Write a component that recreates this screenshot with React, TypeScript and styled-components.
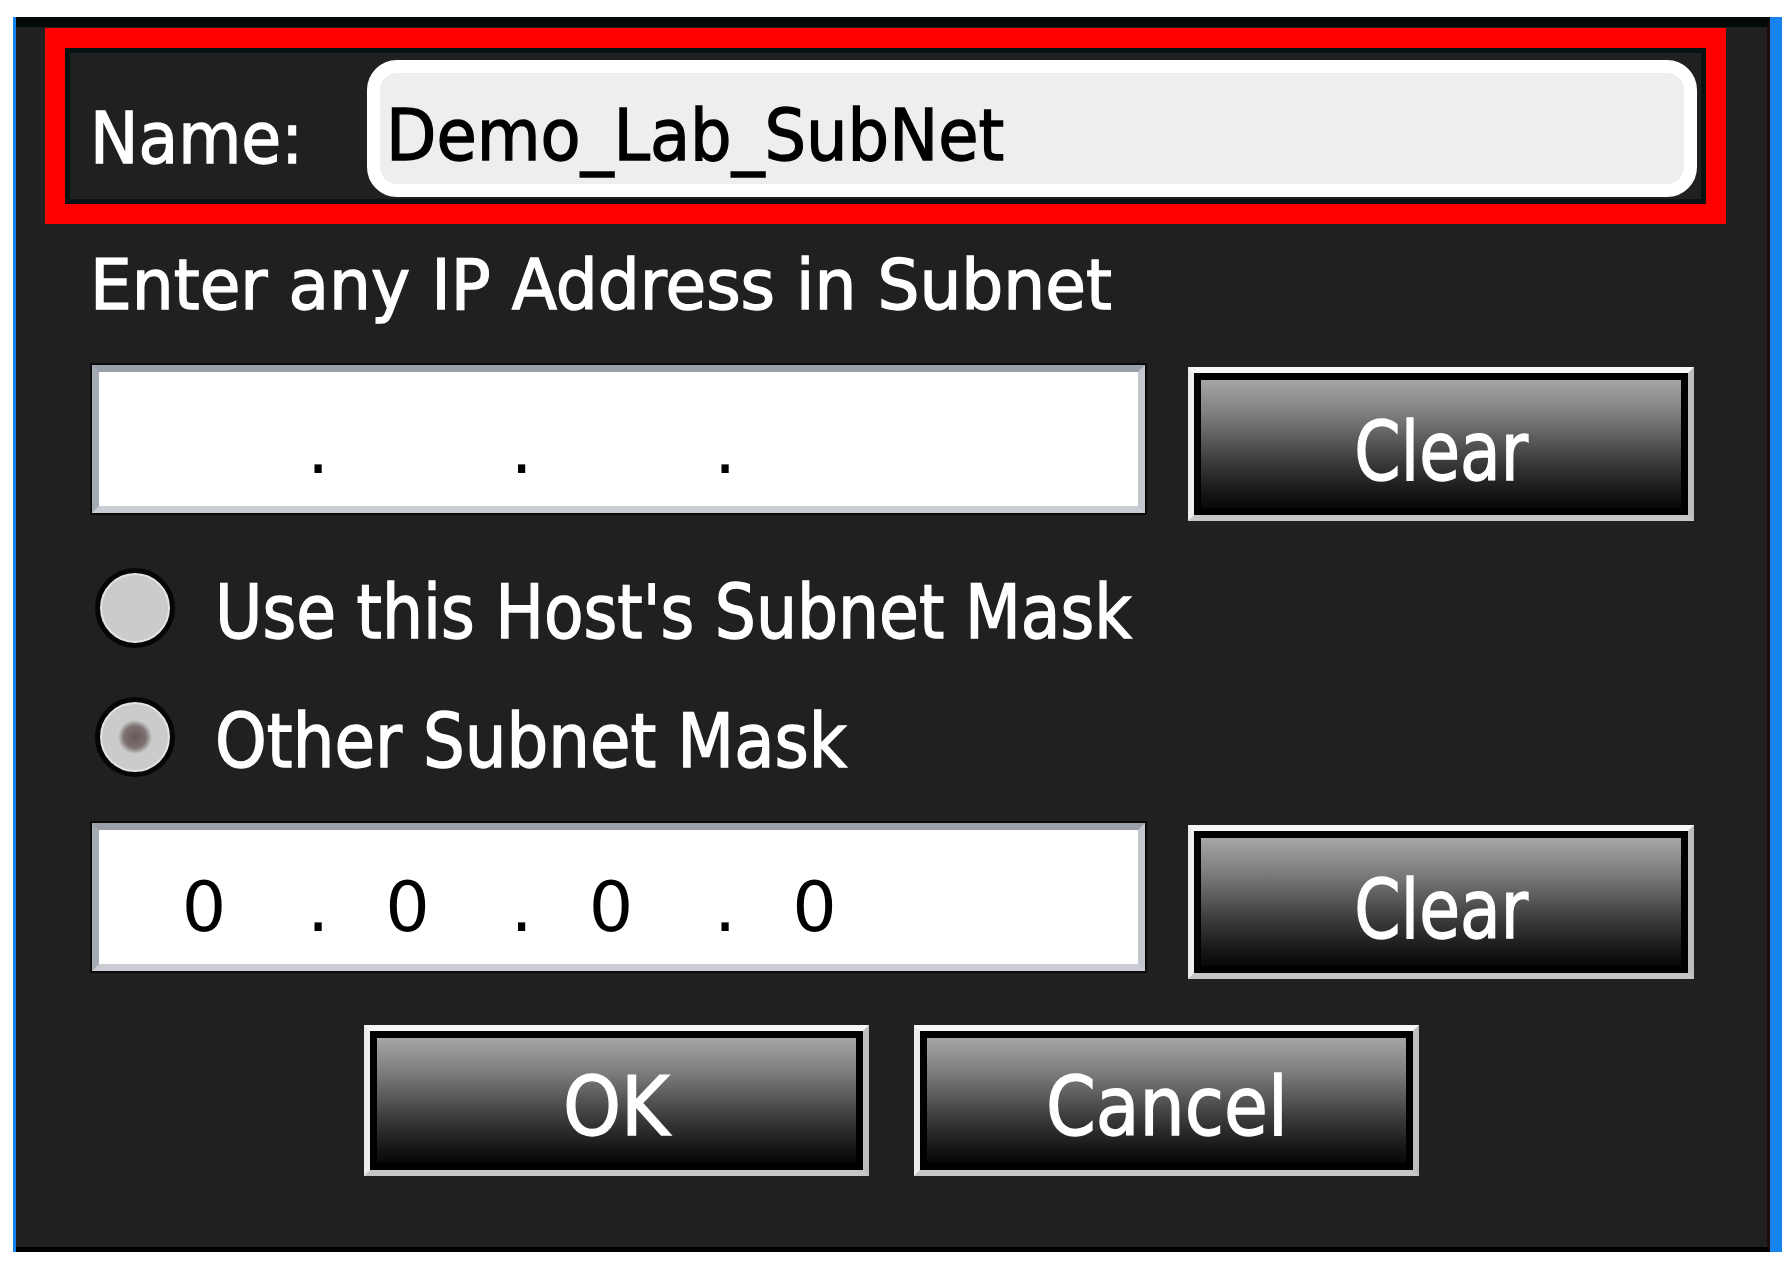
import styled, { createGlobalStyle } from "styled-components";

const GlobalStyle = createGlobalStyle`
  html, body {
    margin: 0;
    padding: 0;
    background: #ffffff;
  }
  body {
    font-family: "DejaVu Sans", Verdana, sans-serif;
  }
`;

const Page = styled.div`
  padding: 17px 0 0 13px;
`;

// blue window edge around the dark dialog
const Frame = styled.div`
  width: 1769px;
  box-sizing: border-box;
  background: #1683ee;
  padding: 0 12px 0 3px;
`;

const Dialog = styled.div`
  display: flex;
  flex-direction: column;
  background: #202020;
  border-top: 10px solid #040909;
  border-bottom: 5px solid #000000;
  border-right: 3px solid #1e0c08;
  padding: 1px 0 71px 0;
`;

// tahoma-ish narrow text: the glyphs are squeezed horizontally and a bit heavier
const Squeeze = styled.span<{ $x: number; $origin?: string }>`
  display: inline-block;
  white-space: pre;
  -webkit-text-stroke: 1.4px currentColor;
  transform: scaleX(${(p) => p.$x});
  transform-origin: ${(p) => p.$origin ?? "left center"};
`;

const Highlight = styled.div`
  margin-left: 29px;
  width: 1681px;
  height: 196px;
  box-sizing: border-box;
  border: 20px solid #ff0000;
  box-shadow: inset 0 0 0 5px #071212;
  display: flex;
  align-items: center;
  padding: 12px 9px 7px 25px;
`;

const NameLabel = styled.div`
  width: 277px;
  flex: none;
  padding-top: 19px;
  color: #ffffff;
  font-size: 72px;
  line-height: 72px;
`;

const NameField = styled.div`
  flex: 1;
  height: 137px;
  box-sizing: border-box;
  border: 13px solid #ffffff;
  border-radius: 30px;
  background: #eeeeee;
  display: flex;
  align-items: center;
  padding: 13px 0 0 6px;
  color: #000000;
  font-size: 72px;
  line-height: 72px;
`;

const Caption = styled.div`
  margin: 26px 0 0 74px;
  color: #ffffff;
  font-size: 70px;
  line-height: 70px;
  height: 70px;
`;

const FieldRow = styled.div<{ $top: number }>`
  display: flex;
  align-items: flex-start;
  gap: 43px;
  margin: ${(p) => p.$top}px 0 0 76px;
`;

const IpBox = styled.div`
  width: 1053px;
  height: 148px;
  box-sizing: border-box;
  background: #ffffff;
  border: 7px solid;
  border-color: #9aa0aa #c3c6cd #c9ccd2 #a4a9b3;
  box-shadow: 0 0 0 2px #0b0b0b;
  display: flex;
  align-items: flex-start;
  padding: 42px 0 0 35px;
  color: #000000;
  font-size: 70px;
  line-height: 70px;
`;

const Octet = styled.div`
  width: 140px;
  flex: none;
  text-align: center;
`;

const Dot = styled.div`
  width: 63.5px;
  flex: none;
  box-sizing: border-box;
  padding-left: 33px;
`;

const BevelButton = styled.button<{ $w: number; $h: number; $pad: number }>`
  width: ${(p) => p.$w}px;
  height: ${(p) => p.$h}px;
  flex: none;
  box-sizing: border-box;
  margin: 0;
  border: 6px solid;
  border-color: #f7f7f7 #bdbdbd #c6c6c6 #ececec;
  box-shadow: inset 0 0 0 7px #000000;
  background: linear-gradient(
    to bottom,
    #a6a6a6 7px,
    #7c7c7c 30%,
    #3c3c3c 62%,
    #151515 85%,
    #070707 calc(100% - 7px)
  );
  display: flex;
  align-items: center;
  justify-content: center;
  padding: ${(p) => p.$pad}px 0 0 0;
  color: #ffffff;
  font-family: "DejaVu Sans", Verdana, sans-serif;
  font-size: 82px;
  line-height: 82px;
  cursor: pointer;
`;

const ClearButton = styled(BevelButton)`
  margin-top: 2px;
`;

const RadioRow = styled.div<{ $top: number }>`
  display: flex;
  align-items: center;
  gap: 40px;
  height: 80px;
  margin: ${(p) => p.$top}px 0 0 79px;
`;

const RadioDot = styled.div<{ $on?: boolean }>`
  width: 80px;
  height: 80px;
  flex: none;
  box-sizing: border-box;
  border-radius: 50%;
  border: 5px solid #060606;
  background: ${(p) =>
    p.$on
      ? "radial-gradient(circle, #675959 0, #7d7070 11px, #cbcbcb 17px)"
      : "#cbcbcb"};
  box-shadow: inset 0 0 0 2px #e4e4e4;
`;

const RadioLabel = styled.div`
  padding-top: 8px;
  color: #ffffff;
  font-size: 74px;
  line-height: 74px;
`;

const ActionRow = styled.div`
  display: flex;
  justify-content: center;
  gap: 45px;
  margin-top: 46px;
`;

const IpAddress = ({ parts }: { parts: string[] }) => (
  <IpBox>
    {parts.map((p, i) => (
      <>
        <Octet key={"o" + i}>{p}</Octet>
        {i < parts.length - 1 && <Dot key={"d" + i}>.</Dot>}
      </>
    ))}
  </IpBox>
);

export default function App() {
  return (
    <Page>
      <GlobalStyle />
      <Frame>
        <Dialog>
          <Highlight>
            <NameLabel>
              <Squeeze $x={0.9}>Name:</Squeeze>
            </NameLabel>
            <NameField>
              <Squeeze $x={0.91}>Demo_Lab_SubNet</Squeeze>
            </NameField>
          </Highlight>

          <Caption>
            <Squeeze $x={0.945}>Enter any IP Address in Subnet</Squeeze>
          </Caption>

          <FieldRow $top={45}>
            <IpAddress parts={["", "", "", ""]} />
            <ClearButton $w={506} $h={154} $pad={16}>
              <Squeeze $x={0.81} $origin="center">
                Clear
              </Squeeze>
            </ClearButton>
          </FieldRow>

          <RadioRow $top={47}>
            <RadioDot />
            <RadioLabel>
              <Squeeze $x={0.875}>Use this Host's Subnet Mask</Squeeze>
            </RadioLabel>
          </RadioRow>
          <RadioRow $top={49}>
            <RadioDot $on />
            <RadioLabel>
              <Squeeze $x={0.89}>Other Subnet Mask</Squeeze>
            </RadioLabel>
          </RadioRow>

          <FieldRow $top={46}>
            <IpAddress parts={["0", "0", "0", "0"]} />
            <ClearButton $w={506} $h={154} $pad={16}>
              <Squeeze $x={0.81} $origin="center">
                Clear
              </Squeeze>
            </ClearButton>
          </FieldRow>

          <ActionRow>
            <BevelButton $w={505} $h={151} $pad={12}>
              <Squeeze $x={0.9} $origin="center">
                OK
              </Squeeze>
            </BevelButton>
            <BevelButton $w={505} $h={151} $pad={12}>
              <Squeeze $x={0.87} $origin="center">
                Cancel
              </Squeeze>
            </BevelButton>
          </ActionRow>
        </Dialog>
      </Frame>
    </Page>
  );
}
